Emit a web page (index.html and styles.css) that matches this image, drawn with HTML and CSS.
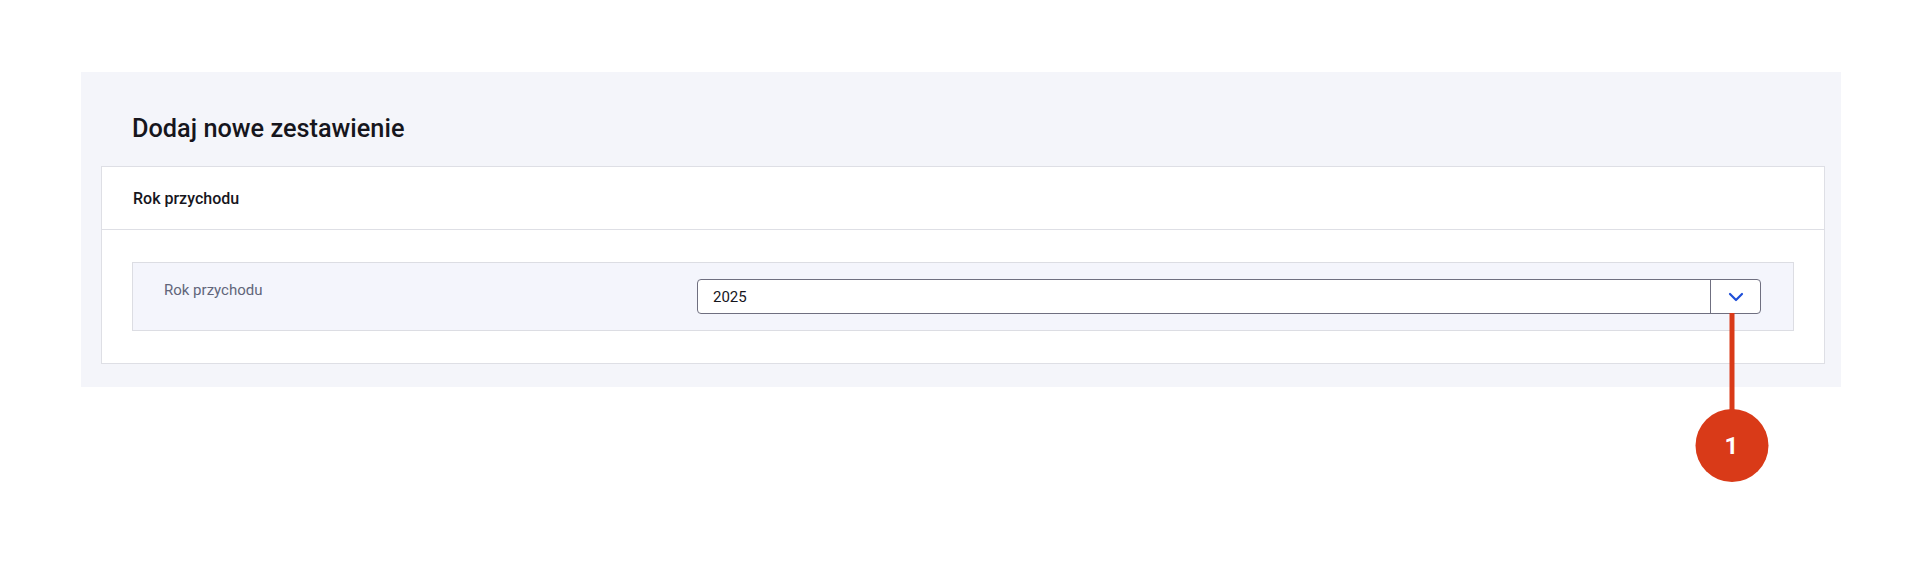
FILE: index.html
```html
<!DOCTYPE html>
<html lang="pl">
<head>
<meta charset="utf-8">
<title>Dodaj nowe zestawienie</title>
<link rel="stylesheet" href="styles.css">
</head>
<body>
  <main class="panel">
    <h1 class="panel-title">Dodaj nowe zestawienie</h1>
    <section class="card">
      <header class="card-header">Rok przychodu</header>
      <div class="card-body">
        <div class="field-row">
          <label class="field-label" for="rok">Rok przychodu</label>
          <div class="select">
            <span class="select-value" id="rok">2025</span>
            <div class="select-button">
              <svg width="16" height="10" viewBox="0 0 16 10" aria-hidden="true">
                <path d="M2 2 L8 8 L14 2" fill="none" stroke="#1f4fd8" stroke-width="2.2" stroke-linecap="round" stroke-linejoin="round"/>
              </svg>
              <div class="callout">
                <div class="callout-line"></div>
                <div class="callout-badge">1</div>
              </div>
            </div>
          </div>
        </div>
      </div>
    </section>
  </main>
</body>
</html>
```

FILE: styles.css
```css
* { box-sizing: border-box; }

html, body {
  min-height: 568px;
}

body {
  margin: 0;
  background: #ffffff;
  font-family: Roboto, "Noto Sans", "Liberation Sans", sans-serif;
  color: #16161d;
}

.panel {
  margin: 72px 0 0 81px;
  width: 1760px;
  height: 315px;
  background: #f4f5fa;
  padding: 41px 16px 23px 20px;
}

.panel-title {
  margin: 0 0 21px 31px;
  font-size: 25.3px;
  line-height: 32px;
  font-weight: 500;
  color: #16161d;
}

.card {
  background: #ffffff;
  border: 1px solid #dedfe5;
}

.card-header {
  height: 63px;
  display: flex;
  align-items: center;
  padding-left: 31px;
  font-size: 16px;
  font-weight: 500;
  border-bottom: 1px solid #dedfe5;
  color: #16161d;
}

.card-body {
  padding: 32px 30px 32px 30px;
}

.field-row {
  display: flex;
  align-items: flex-start;
  height: 69px;
  background: #f4f5fc;
  border: 1px solid #dcdde3;
  padding: 16px 32px 0 31px;
}

.field-label {
  width: 533px;
  flex: none;
  padding-top: 1px;
  font-size: 15px;
  line-height: 20px;
  color: #61657a;
}

.select {
  flex: 1;
  display: flex;
  height: 35px;
  background: #ffffff;
  border: 1px solid #6f6f80;
  border-radius: 4px;
}

.select-value {
  flex: 1;
  display: flex;
  align-items: center;
  padding-left: 15px;
  font-size: 15px;
  color: #16161d;
}

.select-button {
  position: relative;
  width: 50px;
  flex: none;
  display: flex;
  align-items: center;
  justify-content: center;
  border-left: 1px solid #6f6f80;
}

.callout {
  position: absolute;
  z-index: 5;
  left: calc(50% - 4px);
  top: 100%;
  width: 73px;
  height: 171px;
  transform: translateX(-50%);
}

.callout-line {
  width: 5px;
  height: 98px;
  margin: 0 auto;
  background: #d93a18;
}

.callout-badge {
  width: 73px;
  height: 73px;
  margin-top: -2px;
  border-radius: 50%;
  background: #d93a18;
  color: #ffffff;
  display: flex;
  align-items: center;
  justify-content: center;
  font-size: 24px;
  font-weight: 700;
}
```
